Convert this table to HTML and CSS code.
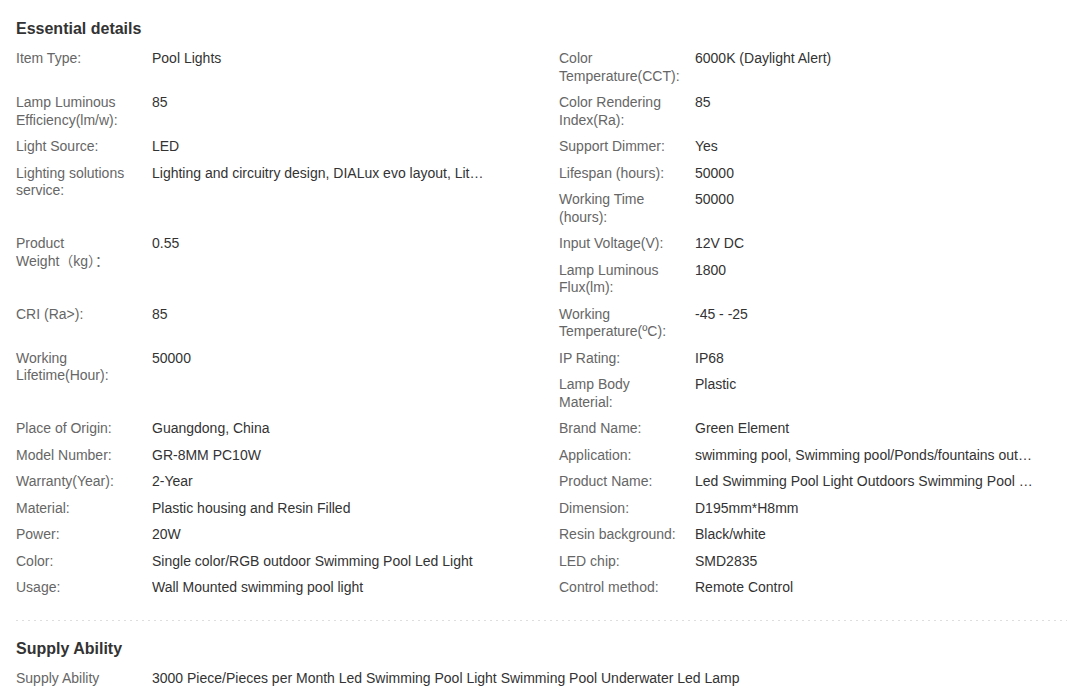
FILE: index.html
```html
<!DOCTYPE html>
<html lang="en">
<head>
<meta charset="utf-8">
<title>Product attributes</title>
<link rel="stylesheet" href="styles.css">
</head>
<body>
<main class="attrs">
  <section class="block">
    <h2 class="block-title">Essential details</h2>
    <div class="attr-grid">
      <div class="attr"><span class="attr-label">Item Type:</span><span class="attr-value">Pool Lights</span></div>
      <div class="attr"><span class="attr-label">Color Temperature(CCT):</span><span class="attr-value">6000K (Daylight Alert)</span></div>

      <div class="attr"><span class="attr-label">Lamp Luminous Efficiency(lm/w):</span><span class="attr-value">85</span></div>
      <div class="attr"><span class="attr-label">Color Rendering Index(Ra):</span><span class="attr-value">85</span></div>

      <div class="attr"><span class="attr-label">Light Source:</span><span class="attr-value">LED</span></div>
      <div class="attr"><span class="attr-label">Support Dimmer:</span><span class="attr-value">Yes</span></div>

      <div class="attr attr--tall"><span class="attr-label">Lighting solutions service:</span><span class="attr-value">Lighting and circuitry design, DIALux evo layout, Litestar 4D layout, Project Installation</span></div>
      <div class="attr"><span class="attr-label">Lifespan (hours):</span><span class="attr-value">50000</span></div>
      <div class="attr"><span class="attr-label">Working Time (hours):</span><span class="attr-value">50000</span></div>

      <div class="attr attr--tall"><span class="attr-label">Product Weight&#8288;（kg）：</span><span class="attr-value">0.55</span></div>
      <div class="attr"><span class="attr-label">Input Voltage(V):</span><span class="attr-value">12V DC</span></div>
      <div class="attr"><span class="attr-label">Lamp Luminous Flux(lm):</span><span class="attr-value">1800</span></div>

      <div class="attr"><span class="attr-label">CRI (Ra&gt;):</span><span class="attr-value">85</span></div>
      <div class="attr"><span class="attr-label">Working Temperature(ºC):</span><span class="attr-value">-45 - -25</span></div>

      <div class="attr attr--tall"><span class="attr-label">Working Lifetime(Hour):</span><span class="attr-value">50000</span></div>
      <div class="attr"><span class="attr-label">IP Rating:</span><span class="attr-value">IP68</span></div>
      <div class="attr"><span class="attr-label">Lamp Body Material:</span><span class="attr-value">Plastic</span></div>

      <div class="attr"><span class="attr-label">Place of Origin:</span><span class="attr-value">Guangdong, China</span></div>
      <div class="attr"><span class="attr-label">Brand Name:</span><span class="attr-value">Green Element</span></div>

      <div class="attr"><span class="attr-label">Model Number:</span><span class="attr-value">GR-8MM PC10W</span></div>
      <div class="attr"><span class="attr-label">Application:</span><span class="attr-value">swimming pool, Swimming pool/Ponds/fountains outdoor</span></div>

      <div class="attr"><span class="attr-label">Warranty(Year):</span><span class="attr-value">2-Year</span></div>
      <div class="attr"><span class="attr-label">Product Name:</span><span class="attr-value">Led Swimming Pool Light Outdoors Swimming Pool Underwater Led Lamp</span></div>

      <div class="attr"><span class="attr-label">Material:</span><span class="attr-value">Plastic housing and Resin Filled</span></div>
      <div class="attr"><span class="attr-label">Dimension:</span><span class="attr-value">D195mm*H8mm</span></div>

      <div class="attr"><span class="attr-label">Power:</span><span class="attr-value">20W</span></div>
      <div class="attr"><span class="attr-label">Resin background:</span><span class="attr-value">Black/white</span></div>

      <div class="attr"><span class="attr-label">Color:</span><span class="attr-value">Single color/RGB outdoor Swimming Pool Led Light</span></div>
      <div class="attr"><span class="attr-label">LED chip:</span><span class="attr-value">SMD2835</span></div>

      <div class="attr"><span class="attr-label">Usage:</span><span class="attr-value">Wall Mounted swimming pool light</span></div>
      <div class="attr"><span class="attr-label">Control method:</span><span class="attr-value">Remote Control</span></div>
    </div>
  </section>

  <hr class="divider">

  <section class="block block--supply">
    <h2 class="block-title">Supply Ability</h2>
    <div class="attr attr--wide"><span class="attr-label">Supply Ability</span><span class="attr-value">3000 Piece/Pieces per Month Led Swimming Pool Light Swimming Pool Underwater Led Lamp</span></div>
  </section>
</main>
</body>
</html>
```

FILE: styles.css
```css
html, body {
  margin: 0;
  padding: 0;
  background: #fff;
}

body {
  font-family: "Liberation Sans", Arial, "Noto Sans CJK SC", sans-serif;
  font-size: 14px;
  color: #333;
}

.attrs {
  padding: 19px 16px 0 16px;
}

.block-title {
  margin: 0 0 11px 0;
  font-size: 16px;
  line-height: 20px;
  font-weight: bold;
  color: #333;
}

.attr-grid {
  display: grid;
  grid-template-columns: 543px 1fr;
  align-items: start;
}

.attr--tall {
  grid-row: span 2;
}

.attr {
  display: flex;
  align-items: flex-start;
  line-height: 17.5px;
  padding-bottom: 9px;
}

.attr-label {
  flex: 0 0 126px;
  width: 126px;
  padding-right: 10px;
  color: #666;
}

.attr-value {
  width: 338px;
  min-width: 0;
  white-space: nowrap;
  overflow: hidden;
  text-overflow: ellipsis;
  color: #333;
}

.attr--wide .attr-value {
  width: auto;
  flex: 1 1 auto;
}

.divider {
  margin: 14px 0 0 0;
  height: 1px;
  border: 0;
  background: repeating-linear-gradient(to right, #dedede 0 2px, transparent 2px 6px);
}

.block--supply {
  padding-top: 18px;
}
```
